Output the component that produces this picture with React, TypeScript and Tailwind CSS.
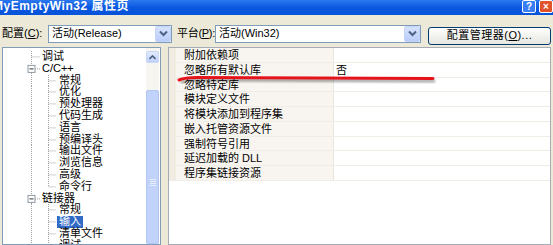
import React from "react";

type TreeRow = {
  text: string;
  level: 1 | 2;
  expander?: boolean;
  selected?: boolean;
  lastChild?: boolean;
};

const treeRows: TreeRow[] = [
  { text: "调试", level: 1 },
  { text: "C/C++", level: 1, expander: true },
  { text: "常规", level: 2 },
  { text: "优化", level: 2 },
  { text: "预处理器", level: 2 },
  { text: "代码生成", level: 2 },
  { text: "语言", level: 2 },
  { text: "预编译头", level: 2 },
  { text: "输出文件", level: 2 },
  { text: "浏览信息", level: 2 },
  { text: "高级", level: 2 },
  { text: "命令行", level: 2, lastChild: true },
  { text: "链接器", level: 1, expander: true },
  { text: "常规", level: 2 },
  { text: "输入", level: 2, selected: true },
  { text: "清单文件", level: 2 },
  { text: "调试", level: 2 },
];

const props: { name: string; value?: string }[] = [
  { name: "附加依赖项" },
  { name: "忽略所有默认库", value: "否" },
  { name: "忽略特定库" },
  { name: "模块定义文件" },
  { name: "将模块添加到程序集" },
  { name: "嵌入托管资源文件" },
  { name: "强制符号引用" },
  { name: "延迟加载的 DLL" },
  { name: "程序集链接资源" },
];

const ChevronDown = () => (
  <svg width="9" height="7" viewBox="0 0 9 7">
    <path d="M1 1.5 L4.5 5 L8 1.5" fill="none" stroke="#4d6185" strokeWidth="2" />
  </svg>
);

// dotted tree connectors, drawn per row
const Connector = ({ row }: { row: TreeRow }) => {
  const h = 11.8;
  const mid = h / 2;
  const dot = { stroke: "#a0a0a0", strokeWidth: 1, strokeDasharray: "1 1" };
  if (row.level === 1) {
    return (
      <svg width="38" height={h} className="shrink-0">
        <line x1="28.5" y1="0" x2="28.5" y2={h} {...dot} />
        {row.expander ? (
          <>
            <line x1="32" y1={mid} x2="37" y2={mid} {...dot} />
            <rect x="25" y={mid - 3.5} width="7" height="7" fill="#fff" stroke="#8e9aa6" />
            <line x1="26.5" y1={mid} x2="30.5" y2={mid} stroke="#333" />
          </>
        ) : (
          <line x1="28.5" y1={mid} x2="37" y2={mid} {...dot} />
        )}
      </svg>
    );
  }
  return (
    <svg width="53" height={h} className="shrink-0">
      <line x1="28.5" y1="0" x2="28.5" y2={h} {...dot} />
      <line x1="45.5" y1="0" x2="45.5" y2={row.lastChild ? mid : h} {...dot} />
      <line x1="45.5" y1={mid} x2="53" y2={mid} {...dot} />
    </svg>
  );
};

export default function App() {
  return (
    <div
      className="w-[553px] h-[245px] overflow-hidden bg-[#ece9d8] flex flex-col text-[11px] text-black"
      style={{ fontFamily: '"Liberation Sans", "Noto Sans CJK SC", sans-serif' }}
    >
      {/* Title bar */}
      <div className="h-[15px] shrink-0 flex items-start bg-gradient-to-b from-[#2b78f0] via-[#0a58e0] to-[#0553d8]">
        <div className="-ml-[7px] flex-1 text-white font-bold text-[12px] leading-[13px] tracking-[0.5px] whitespace-nowrap">
          MyEmptyWin32 属性页
        </div>
        <div className="w-[14px] h-[13px] rounded-[2px] border border-white bg-[#3b7df5] text-white font-bold text-[10px] leading-[11px] text-center">
          ?
        </div>
        <div className="ml-[3px] w-[14px] h-[13px] rounded-[2px] border border-white bg-[#e0532b] text-white font-bold text-[10px] leading-[11px] text-center">
          ×
        </div>
      </div>

      {/* Config row */}
      <div className="mt-[9px] h-[19px] shrink-0 flex items-center whitespace-nowrap">
        <span className="ml-[2px] w-[46px]">配置(<u>C</u>):</span>
        <div className="w-[124px] h-[18px] border border-[#7f9db9] bg-white flex items-center">
          <span className="flex-1 pl-[3px]">活动(Release)</span>
          <div className="w-[16px] h-[16px] rounded-[2px] bg-gradient-to-b from-[#d7e3fd] to-[#b9cdf8] border border-[#c3d3fa] flex items-center justify-center">
            <ChevronDown />
          </div>
        </div>
        <span className="ml-[5px] w-[38px] tracking-[-0.3px]">平台(<u>P</u>):</span>
        <div className="w-[206px] h-[18px] border border-[#7f9db9] bg-white flex items-center">
          <span className="flex-1 pl-[3px]">活动(Win32)</span>
          <div className="w-[16px] h-[16px] rounded-[2px] bg-gradient-to-b from-[#d7e3fd] to-[#b9cdf8] border border-[#c3d3fa] flex items-center justify-center">
            <ChevronDown />
          </div>
        </div>
        <div className="ml-[7px] mt-[4px] w-[123px] h-[18px] rounded-[3px] border border-[#003c74] bg-gradient-to-b from-white to-[#e6e5df] flex items-center justify-center tracking-[0.5px]">
          配置管理器(<u>O</u>)...
        </div>
      </div>

      {/* Main panels */}
      <div className="mt-[4px] flex-1 flex min-h-0 pl-[2px] pr-[2px]">
        {/* Tree */}
        <div className="w-[159px] border border-[#7f9db9] bg-white flex">
          <div className="flex-1 pt-[3px] overflow-hidden">
            {treeRows.map((row, i) => (
              <div key={i} className="h-[11.8px] flex items-center leading-[11.8px] whitespace-nowrap">
                <Connector row={row} />
                <span
                  className={
                    row.selected
                      ? "ml-[1px] px-[2px] bg-[#316ac5] text-white"
                      : row.level === 1
                      ? "ml-[1px]"
                      : "ml-[3px]"
                  }
                >
                  {row.text}
                </span>
              </div>
            ))}
          </div>
          {/* Scrollbar */}
          <div className="w-[13px] mr-[1px] pt-[3px] flex flex-col bg-[#f6f5ef]">
            <div className="h-[12px] rounded-[2px] bg-gradient-to-b from-[#e1eafe] to-[#c0d2fb] border border-[#c8d6f8] flex items-center justify-center">
              <svg width="7" height="5" viewBox="0 0 7 5">
                <path d="M0.5 4 L3.5 1 L6.5 4" fill="none" stroke="#4d6185" strokeWidth="1.6" />
              </svg>
            </div>
            <div className="h-[27px]" />
            <div className="flex-1 rounded-[2px] bg-[#c1d3fb] border border-[#b3c6f3] flex flex-col items-center pt-[88px] gap-[1px]">
              <div className="w-[6px] h-[1px] bg-[#e6eeff]" />
              <div className="w-[6px] h-[1px] bg-[#e6eeff]" />
              <div className="w-[6px] h-[1px] bg-[#e6eeff]" />
              <div className="w-[6px] h-[1px] bg-[#e6eeff]" />
            </div>
          </div>
        </div>

        {/* Property grid */}
        <div className="ml-[7px] flex-1 border border-[#a5acb5] bg-white relative">
          {props.map((p, i) => (
            <div key={i} className="h-[14.75px] flex border-b border-[#efede6]">
              <div className="w-[7px] bg-[#f0ece1]" />
              <div className="w-[158px] bg-[#f8f5f0] pl-[8px] leading-[14px] border-r border-[#e9e6dd]">{p.name}</div>
              <div className="flex-1 pl-[2px] leading-[14px]">{p.value}</div>
            </div>
          ))}

          {/* red hand-drawn underline */}
          <svg className="absolute left-[6px] top-[24px] pointer-events-none" width="262" height="12" viewBox="0 0 262 12">
            <defs>
              <filter id="sh" x="-5%" y="-50%" width="110%" height="250%">
                <feGaussianBlur stdDeviation="1.2" />
              </filter>
            </defs>
            <path d="M4 8 Q10 5.5 22 5.5 L258 6.5" fill="none" stroke="rgba(0,0,0,0.35)" strokeWidth="3" filter="url(#sh)" transform="translate(2 2.5)" />
            <path d="M4 8 Q10 5.5 22 5.5 L258 6.5" fill="none" stroke="#e5141c" strokeWidth="3" strokeLinecap="round" />
          </svg>
        </div>
      </div>
    </div>
  );
}
